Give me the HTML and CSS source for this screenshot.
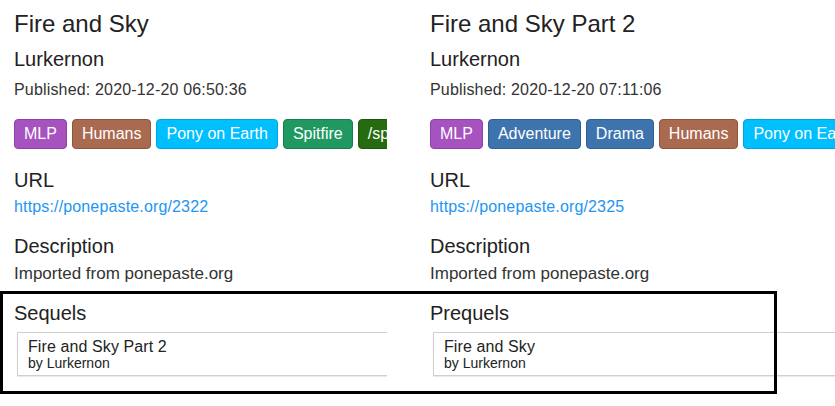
FILE: index.html
```html
<!DOCTYPE html>
<html>
<head>
<meta charset="utf-8">
<link rel="stylesheet" href="styles.css">
</head>
<body>
<div class="page">
  <section class="col col-left">
    <div class="col-inner">
      <h1 class="title">Fire and Sky</h1>
      <h2 class="author">Lurkernon</h2>
      <p class="published">Published: 2020-12-20 06:50:36</p>
      <div class="tags">
        <span class="tag tag-mlp">MLP</span>
        <span class="tag tag-humans">Humans</span>
        <span class="tag tag-pony">Pony on Earth</span>
        <span class="tag tag-spitfire">Spitfire</span>
        <span class="tag tag-sp">/spitfire/</span>
      </div>
      <h3 class="label label-url">URL</h3>
      <a class="link" href="#">https://ponepaste.org/2322</a>
      <h3 class="label label-desc">Description</h3>
      <p class="desc">Imported from ponepaste.org</p>
      <h3 class="label label-rel">Sequels</h3>
      <div class="card">
        <div class="card-title">Fire and Sky Part 2</div>
        <div class="card-by">by Lurkernon</div>
      </div>
    </div>
  </section>
  <section class="col col-right">
    <div class="col-inner">
      <h1 class="title">Fire and Sky Part 2</h1>
      <h2 class="author">Lurkernon</h2>
      <p class="published">Published: 2020-12-20 07:11:06</p>
      <div class="tags">
        <span class="tag tag-mlp">MLP</span>
        <span class="tag tag-adv">Adventure</span>
        <span class="tag tag-adv">Drama</span>
        <span class="tag tag-humans">Humans</span>
        <span class="tag tag-pony">Pony on Earth</span>
      </div>
      <h3 class="label label-url">URL</h3>
      <a class="link" href="#">https://ponepaste.org/2325</a>
      <h3 class="label label-desc">Description</h3>
      <p class="desc">Imported from ponepaste.org</p>
      <h3 class="label label-rel">Prequels</h3>
      <div class="card">
        <div class="card-title">Fire and Sky</div>
        <div class="card-by">by Lurkernon</div>
      </div>
    </div>
  </section>
  <div class="highlight"></div>
</div>
</body>
</html>
```
FILE: styles.css
```css
html, body {
  margin: 0;
  padding: 0;
  background: #fff;
  overflow: hidden;
}
body {
  width: 835px;
  height: 406px;
  font-family: "Liberation Sans", Arial, sans-serif;
  color: #333;
}
.page {
  position: relative;
  display: flex;
  width: 835px;
  height: 406px;
}
.col {
  overflow: hidden;
  flex: none;
}
.col-left {
  width: 387px;
}
.col-right {
  width: 419px;
  margin-left: 29px;
}
.col-inner {
  width: 460px;
  padding-left: 14px;
  display: flex;
  flex-direction: column;
  align-items: flex-start;
}
.title {
  margin: 9.5px 0 0;
  font-size: 24px;
  font-weight: normal;
  line-height: 1.2;
  color: #222;
}
.author {
  margin: 9px 0 0;
  font-size: 20px;
  font-weight: normal;
  line-height: 1.2;
  color: #222;
}
.published {
  margin: 9px 0 0;
  font-size: 16px;
  line-height: 1.2;
  letter-spacing: 0.17px;
}
.tags {
  display: flex;
  gap: 5px;
  margin-top: 20px;
  white-space: nowrap;
}
.tag {
  display: inline-block;
  font-size: 16px;
  line-height: 20px;
  padding: 4px 9px;
  border: 1px solid;
  border-radius: 4px;
  color: #fff;
}
.tag-mlp { background: #a652bf; border-color: #8d40a6; }
.tag-humans { background: #a96a50; border-color: #8d553e; }
.tag-pony { background: #00bfff; border-color: #00a5dd; }
.tag-spitfire { background: #1f9960; border-color: #187d4e; }
.tag-sp { background: #266b0f; border-color: #1d560a; }
.tag-adv { background: #3e74ad; border-color: #305f92; }
.label {
  margin: 0;
  font-size: 20px;
  font-weight: normal;
  line-height: 1.2;
  color: #222;
}
.label-url { margin-top: 19px; }
.label-desc { margin-top: 17px; }
.label-rel { margin-top: 17px; }
.link {
  margin-top: 5px;
  font-size: 16px;
  line-height: 1.2;
  letter-spacing: 0.15px;
  color: #2196f3;
  text-decoration: none;
}
.desc {
  margin: 6px 0 0;
  font-size: 17px;
  line-height: 1.2;
}
.card {
  align-self: stretch;
  margin: 6.5px 0 0 3px;
  padding: 5px 10px 4px;
  border: 1px solid #d0d0d0;
  box-shadow: 0 1px 1px rgba(0, 0, 0, 0.08);
  background: #fff;
}
.card-title {
  font-size: 16px;
  line-height: 18px;
  letter-spacing: 0.1px;
  color: #222;
}
.card-by {
  font-size: 14px;
  line-height: 15px;
  color: #222;
}
.highlight {
  position: absolute;
  left: 0;
  top: 291px;
  width: 771px;
  height: 97px;
  border: 3px solid #000;
  pointer-events: none;
}
```
